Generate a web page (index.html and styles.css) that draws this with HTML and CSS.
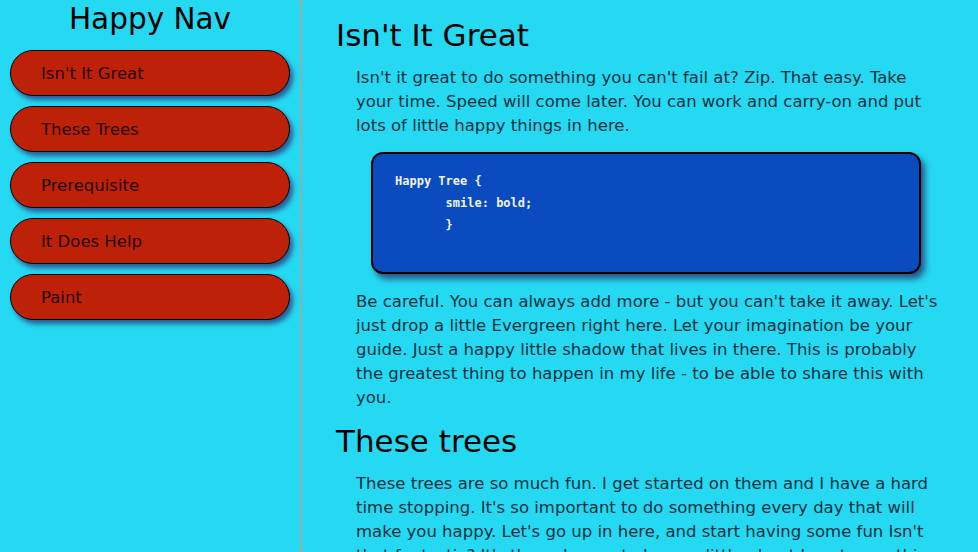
FILE: index.html
```html
<!DOCTYPE html>
<html>
<head>
<meta charset="utf-8">
<link rel="stylesheet" href="styles.css">
</head>
<body>
<div class="layout">
  <nav class="sidebar">
    <div class="brand">Happy Nav</div>
    <ul class="nav">
      <li><a class="pill">Isn't It Great</a></li>
      <li><a class="pill">These Trees</a></li>
      <li><a class="pill">Prerequisite</a></li>
      <li><a class="pill">It Does Help</a></li>
      <li><a class="pill">Paint</a></li>
    </ul>
  </nav>
  <main class="content">
    <h1 class="title">Isn't It Great</h1>
    <p class="text">Isn't it great to do something you can't fail at? Zip. That easy. Take your time. Speed will come later. You can work and carry-on and put lots of little happy things in here.</p>
    <pre class="code">Happy Tree {
       smile: bold;
       }</pre>
    <p class="text">Be careful. You can always add more - but you can't take it away. Let's just drop a little Evergreen right here. Let your imagination be your guide. Just a happy little shadow that lives in there. This is probably the greatest thing to happen in my life - to be able to share this with you.</p>
    <h1 class="title">These trees</h1>
    <p class="text">These trees are so much fun. I get started on them and I have a hard time stopping. It's so important to do something every day that will make you happy. Let's go up in here, and start having some fun Isn't that fantastic? It's the only way to learn a little about how to use this tool.</p>
  </main>
</div>
</body>
</html>
```
FILE: styles.css
```css
html, body {
  margin: 0;
  padding: 0;
  background: #25d9f2;
  font-family: "DejaVu Sans", Verdana, sans-serif;
  overflow: hidden;
}
.layout {
  display: flex;
  height: 552px;
  overflow: hidden;
}
.sidebar {
  width: 300px;
  flex: none;
  border-right: 2px dotted #f08a6a;
  box-sizing: content-box;
}
.brand {
  text-align: center;
  font-size: 29.5px;
  line-height: 38px;
  color: #000;
  margin: 0 0 12px;
}
.nav {
  list-style: none;
  margin: 0;
  padding: 0 10px;
  display: flex;
  flex-direction: column;
  gap: 10px;
}
.pill {
  display: block;
  height: 44px;
  line-height: 46px;
  border: 1px solid #000;
  border-radius: 23px;
  background: #bd2209;
  color: #260804;
  font-size: 16.5px;
  padding-left: 30px;
  box-shadow: 3px 4px 5px rgba(40, 50, 120, 0.75);
}
.content {
  flex: 1;
  padding: 4px 34px 0;
  min-width: 0;
}
.title {
  font-weight: normal;
  font-size: 31px;
  line-height: 38px;
  margin: 12px 0 12px;
  color: #000;
}
.text {
  margin: 0 0 12px 20px;
  max-width: 586px;
  font-size: 16.5px;
  line-height: 24px;
  color: #0b3140;
}
.code {
  margin: 14px 23px 16px 35px;
  background: #0a4bbf;
  border: 2px solid #000;
  border-radius: 12px;
  box-shadow: 4px 5px 6px rgba(40, 50, 110, 0.8);
  color: #f2f2f2;
  font-family: "DejaVu Sans Mono", monospace;
  font-weight: bold;
  font-size: 12px;
  line-height: 22px;
  padding: 16px 22px 38px;
  height: 64px;
  white-space: pre;
}
```
